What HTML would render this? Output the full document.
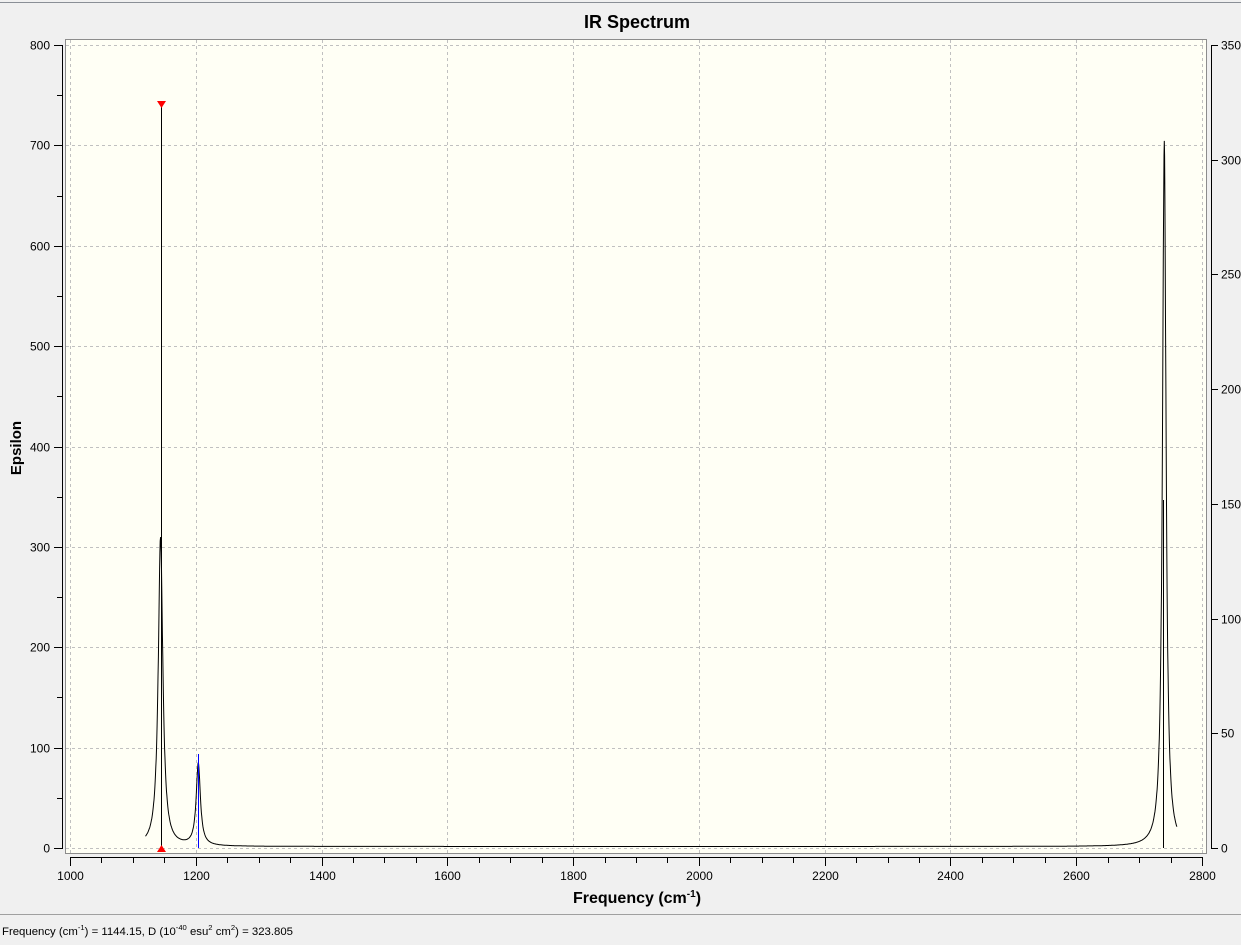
<!DOCTYPE html>
<html><head><meta charset="utf-8"><style>
body{margin:0;width:1241px;height:940px;background:#f0f0f0;overflow:hidden;font-family:"Liberation Sans",sans-serif}
</style></head><body>
<svg id="s" width="1241" height="940" xmlns="http://www.w3.org/2000/svg" font-family="Liberation Sans, sans-serif">
<line x1="0" y1="2.5" x2="1241" y2="2.5" stroke="#8a8f96" stroke-width="1"/>
<text x="637" y="28" font-size="18" font-weight="bold" text-anchor="middle">IR Spectrum</text>
<rect x="65.5" y="39.5" width="1141" height="814" fill="#fffff5" stroke="#8c8c8c"/>
<g id="grid" stroke="#c0c0c0" stroke-dasharray="3,3" stroke-width="1"></g>
<g id="ax" stroke="#000" stroke-width="1"></g>
<g id="lab" font-size="12" fill="#000"></g>
<text transform="translate(21,448) rotate(-90)" font-size="15" font-weight="bold" text-anchor="middle">Epsilon</text>
<text x="637" y="903" font-size="16" font-weight="bold" text-anchor="middle">Frequency (cm<tspan dy="-6" font-size="10">-1</tspan><tspan dy="6">)</tspan></text>
<path id="curve" fill="none" stroke="#000" stroke-width="1"/>
<line x1="161.5" y1="104" x2="161.5" y2="848" stroke="#000"/>
<line x1="198.5" y1="754" x2="198.5" y2="848" stroke="#0000ff"/>
<line x1="1163.5" y1="500" x2="1163.5" y2="848" stroke="#000"/>
<polygon points="157,101 166,101 161.5,108" fill="#f00"/>
<polygon points="157,852 166,852 161.5,845" fill="#f00"/>
<line x1="0" y1="914.5" x2="1241" y2="914.5" stroke="#a0a0a0"/>
<text x="2" y="935" font-size="11.2" textLength="291" lengthAdjust="spacingAndGlyphs">Frequency (cm<tspan dy="-5" font-size="7.5">-1</tspan><tspan dy="5">) = 1144.15, D (10</tspan><tspan dy="-5" font-size="7.5">-40</tspan><tspan dy="5"> esu</tspan><tspan dy="-5" font-size="7.5">2</tspan><tspan dy="5"> cm</tspan><tspan dy="-5" font-size="7.5">2</tspan><tspan dy="5">) = 323.805</tspan></text>
</svg>
<script>
const NS="http://www.w3.org/2000/svg";
function el(p,t,a,txt){const e=document.createElementNS(NS,t);for(const k in a)e.setAttribute(k,a[k]);if(txt!=null)e.textContent=txt;document.getElementById(p).appendChild(e);}
const fx=f=>70+(f-1000)*0.6289, fy=v=>848-v*1.00375;
for(let f=1000;f<=2800;f+=200){const x=Math.round(fx(f))+.5;el('grid','line',{x1:x,y1:40,x2:x,y2:853});}
for(let v=0;v<=800;v+=100){const y=Math.round(fy(v))+.5;el('grid','line',{x1:66,y1:y,x2:1206,y2:y});}
el('ax','line',{x1:62.5,y1:45,x2:62.5,y2:849});
for(let v=0;v<=800;v+=50){const y=Math.round(fy(v))+.5;el('ax','line',{x1:v%100?57:54,y1:y,x2:62,y2:y});if(v%100==0)el('lab','text',{x:50,y:y+4,'text-anchor':'end'},v);}
el('ax','line',{x1:1211.5,y1:45,x2:1211.5,y2:849});
for(let v=0;v<=350;v+=50){const y=Math.round(848-v*2.2943)+.5;el('ax','line',{x1:1211,y1:y,x2:1218,y2:y});el('lab','text',{x:1221,y:y+4},v);}
el('ax','line',{x1:70,y1:857.5,x2:1203,y2:857.5});
for(let f=1000;f<=2800;f+=50){const x=Math.round(fx(f))+.5;el('ax','line',{x1:x,y1:857,x2:x,y2:f%200==0?866:863});if(f%200==0)el('lab','text',{x:x,y:880,'text-anchor':'middle'},f);}
const pk=[[1144,308,4.4],[1204,82,4],[2740,703,3.4]];
let d="";for(let f=1120;f<=2760;f+=0.5){let v=1.5;for(const[p,a,w]of pk)v+=a*w*w/((f-p)*(f-p)+w*w);d+=(d?"L":"M")+fx(f).toFixed(1)+","+fy(v).toFixed(1);}
document.getElementById('curve').setAttribute('d',d);
</script>
</body></html>
